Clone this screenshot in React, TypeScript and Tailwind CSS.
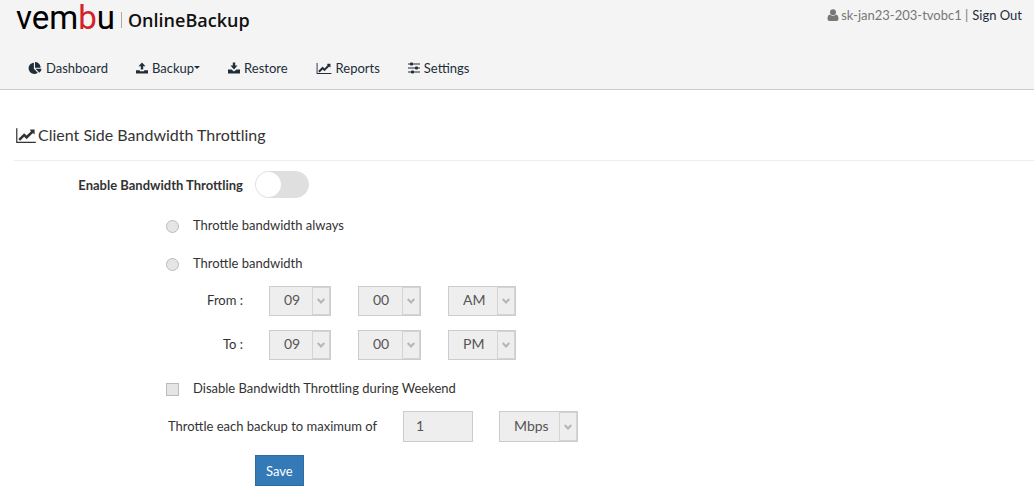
import React, { useState } from 'react';
import { clsx } from 'clsx';

interface IconProps {
    className?: string;
}

function PieIcon({ className }: IconProps) {
    return (
        <svg className={className} viewBox="0 0 544 512" fill="currentColor" aria-hidden="true">
            <path d="M527.79 288H290.5l158.03 158.03c6.04 6.04 15.98 6.53 22.19.68 38.7-36.46 65.32-85.61 73.13-140.86 1.34-9.46-6.51-17.85-16.06-17.85zm-15.83-64.8C503.72 103.74 408.26 8.28 288.8.04 279.68-.59 272 7.1 272 16.24V240h223.77c9.14 0 16.82-7.68 16.19-16.8zM224 288V50.71c0-9.55-8.39-17.4-17.84-16.06C86.99 51.49-4.1 155.6.14 280.37 4.5 408.51 114.83 513.59 243.03 511.98c50.4-.63 96.97-16.87 135.26-44.03 7.9-5.6 8.42-17.23 1.57-24.08L224 288z" />
        </svg>
    );
}

function UploadIcon({ className }: IconProps) {
    return (
        <svg className={className} viewBox="0 0 13 12" fill="currentColor" aria-hidden="true">
            <path d="M6.5 0 10.3 4.2H7.8V7.6H5.2V4.2H2.7zM0 8.5h4.2v1h4.6v-1H13V12H0z" />
        </svg>
    );
}

function DownloadIcon({ className }: IconProps) {
    return (
        <svg className={className} viewBox="0 0 13 12" fill="currentColor" aria-hidden="true">
            <path d="M5.2 0h2.6v3.4h2.5L6.5 7.6 2.7 3.4h2.5zM0 7.6h3.8l2.7 2.2 2.7-2.2H13V12H0z" />
        </svg>
    );
}

function ChartIcon({ className }: IconProps) {
    return (
        <svg className={className} viewBox="0 0 2048 1664" fill="currentColor" aria-hidden="true">
            <path d="M2048 1536v128H0V128h128v1408h1920zM1920 288v435q0 21-19.500 29.500T1865 745l-121-121-633 633q-10 10-23 10t-23-10l-233-233-416 416-192-192 585-585q10-10 23-10t23 10l233 233 464-464-121-121q-16-16-7.500-35.500T1581 256h307q14 0 23 9t9 23z" />
        </svg>
    );
}

function SlidersIcon({ className }: IconProps) {
    return (
        <svg className={className} viewBox="0 0 12 12" fill="currentColor" aria-hidden="true">
            <path d="M0 1.500h12v1H0zM0 5.500h12v1H0zM0 9.500h12v1H0z" />
            <rect x="2" y="0.500" width="3" height="3" rx="1" />
            <rect x="7" y="4.500" width="3" height="3" rx="1" />
            <rect x="3" y="8.500" width="3" height="3" rx="1" />
        </svg>
    );
}

function UserIcon({ className }: IconProps) {
    return (
        <svg className={className} viewBox="0 0 11 12" fill="currentColor" aria-hidden="true">
            <circle cx="5.500" cy="3.200" r="3" />
            <path d="M2.600 5.500C.8 5.600 0 7.400 0 9.800 0 11.200.9 12 2.200 12h6.600c1.300 0 2.200-.8 2.200-2.200 0-2.400-.8-4.200-2.600-4.300-.8.800-1.800 1.300-2.900 1.300s-2.100-.5-2.900-1.300z" />
        </svg>
    );
}

const navItems = [
    { label: 'Dashboard', icon: <PieIcon className="h-3 w-3.5" /> },
    { label: 'Backup', icon: <UploadIcon className="h-3 w-3" />, caret: true },
    { label: 'Restore', icon: <DownloadIcon className="h-3 w-3" /> },
    { label: 'Reports', icon: <ChartIcon className="h-3 w-4" /> },
    { label: 'Settings', icon: <SlidersIcon className="h-3 w-3" /> },
];

function Header() {
    return (
        <header className="border-b border-[#ccc] bg-[#f4f4f4]">
            <div className="flex items-start justify-between pl-4 pr-3">
                <a href="#home" className="flex h-10 items-center">
                    <span className="pb-1 font-[Roboto,sans-serif] text-[33px] leading-9 text-black">
                        vem<span className="text-[#d2232a]">b</span>u
                    </span>
                    <span className="mx-1.5 h-4 w-px bg-[#aaa]" />
                    <span className="font-['Open_Sans',sans-serif] text-lg leading-8 font-semibold text-[#111]">OnlineBackup</span>
                </a>
                <div className="flex h-[30px] items-center">
                    <UserIcon className="mr-0.5 h-3 w-3 text-[#777]" />
                    <span className="text-[#777]">sk-jan23-203-tvobc1 |</span>
                    <a href="#signout" className="ml-1 text-[#222d3a]">Sign Out</a>
                </div>
            </div>
            <nav className="flex h-[49px] items-center gap-7 px-7 pt-1.5">
                {navItems.map((item) => (
                    <a key={item.label} href={`#${item.label.toLowerCase()}`} className="flex items-center gap-1 text-[#222d3a]">
                        {item.icon}
                        <span>{item.label}</span>
                        {item.caret && <span className="-ml-1 border-x-3 border-t-3 border-x-transparent border-t-current" />}
                    </a>
                ))}
            </nav>
        </header>
    );
}

interface SelectProps {
    label: string;
    options: string[];
    defaultValue: string;
    disabled: boolean;
    className?: string;
}

function Select({ label, options, defaultValue, disabled, className }: SelectProps) {
    return (
        <span className={clsx('relative flex border border-[#ccc] bg-[#eee]', className)}>
            <select
                aria-label={label}
                defaultValue={defaultValue}
                disabled={disabled}
                className="w-full appearance-none pb-0.5 pl-3.5 text-sm text-[#555] opacity-100 outline-none"
            >
                {options.map((option) => (
                    <option key={option}>{option}</option>
                ))}
            </select>
            <span className="pointer-events-none absolute inset-y-0 right-0 flex w-[18px] items-center justify-center border border-[#d4d4d4]">
                <svg className="h-2 w-2 text-[#b5b5b5]" viewBox="0 0 8 8" fill="none" stroke="currentColor" strokeWidth={2} aria-hidden="true">
                    <path d="M.7 2 4 5.500 7.300 2" />
                </svg>
            </span>
        </span>
    );
}

const hours = ['01', '02', '03', '04', '05', '06', '07', '08', '09', '10', '11', '12'];
const minutes = ['00', '15', '30', '45'];

function TimeRow({ label, period, disabled }: { label: string; period: string; disabled: boolean }) {
    return (
        <div className="flex h-11 items-center">
            <span className="w-[243px] pb-0.5 text-right">{label} :</span>
            <div className="ml-[26px] flex gap-[27px]">
                <Select label={`${label} hour`} options={hours} defaultValue="09" disabled={disabled} className="h-[30px] w-[62px]" />
                <Select label={`${label} minute`} options={minutes} defaultValue="00" disabled={disabled} className="h-[30px] w-[63px]" />
                <Select label={`${label} period`} options={['AM', 'PM']} defaultValue={period} disabled={disabled} className="h-[30px] w-[68px]" />
            </div>
        </div>
    );
}

export default function App() {
    const [enabled, setEnabled] = useState(false);
    const choice = 'size-[13px] appearance-none border border-[#bbb] bg-[#e5e5e5] checked:bg-[#337ab7]';

    return (
        <div className="min-h-screen bg-white font-[Lato,sans-serif] text-[13px] leading-5 text-[#333]">
            <Header />
            <main>
                <h1 className="ml-3.5 flex h-[71px] items-center gap-0.5 border-b border-[#eee] pt-5 pl-0.5 text-base">
                    <ChartIcon className="h-4 w-5" />
                    Client Side Bandwidth Throttling
                </h1>
                <form onSubmit={(e) => e.preventDefault()}>
                    <div className="flex h-[46px] items-center">
                        <label htmlFor="enable" className="w-[243px] pt-0.5 text-right font-bold">Enable Bandwidth Throttling</label>
                        <button
                            id="enable"
                            type="button"
                            role="switch"
                            aria-checked={enabled}
                            onClick={() => setEnabled(!enabled)}
                            className={clsx('ml-3 flex h-[27px] w-[54px] rounded-full border', enabled ? 'justify-end border-[#337ab7] bg-[#337ab7]' : 'border-[#dfdfdf] bg-[#dfdfdf]')}
                        >
                            <span className="size-[25px] rounded-full bg-white" />
                        </button>
                    </div>
                    <label className="flex h-[38px] items-center gap-3.5 pl-[166px]">
                        <input type="radio" name="mode" disabled={!enabled} className={clsx(choice, 'rounded-full')} />
                        <span className="pb-0.5">Throttle bandwidth always</span>
                    </label>
                    <label className="flex h-[38px] items-center gap-3.5 pl-[166px]">
                        <input type="radio" name="mode" disabled={!enabled} className={clsx(choice, 'rounded-full')} />
                        <span className="pb-0.5">Throttle bandwidth</span>
                    </label>
                    <div className="-mt-1">
                        <TimeRow label="From" period="AM" disabled={!enabled} />
                        <TimeRow label="To" period="PM" disabled={!enabled} />
                    </div>
                    <label className="flex h-11 items-center gap-3.5 pl-[166px]">
                        <input type="checkbox" disabled={!enabled} className={choice} />
                        <span className="pb-0.5">Disable Bandwidth Throttling during Weekend</span>
                    </label>
                    <div className="flex items-center">
                        <label htmlFor="limit" className="w-[377px] pb-0.5 text-right">Throttle each backup to maximum of</label>
                        <input
                            id="limit"
                            type="text"
                            defaultValue="1"
                            disabled={!enabled}
                            className="ml-[26px] h-[31px] w-[70px] border border-[#ccc] bg-[#eee] px-3 pb-0.5 text-sm text-[#555]"
                        />
                        <Select label="Unit" options={['Kbps', 'Mbps']} defaultValue="Mbps" disabled={!enabled} className="ml-[26px] h-[31px] w-[79px]" />
                    </div>
                    <button type="submit" className="mt-[13px] ml-[255px] h-[31px] border border-[#2e6da4] bg-[#337ab7] px-2.5 text-white">
                        Save
                    </button>
                </form>
            </main>
        </div>
    );
}
